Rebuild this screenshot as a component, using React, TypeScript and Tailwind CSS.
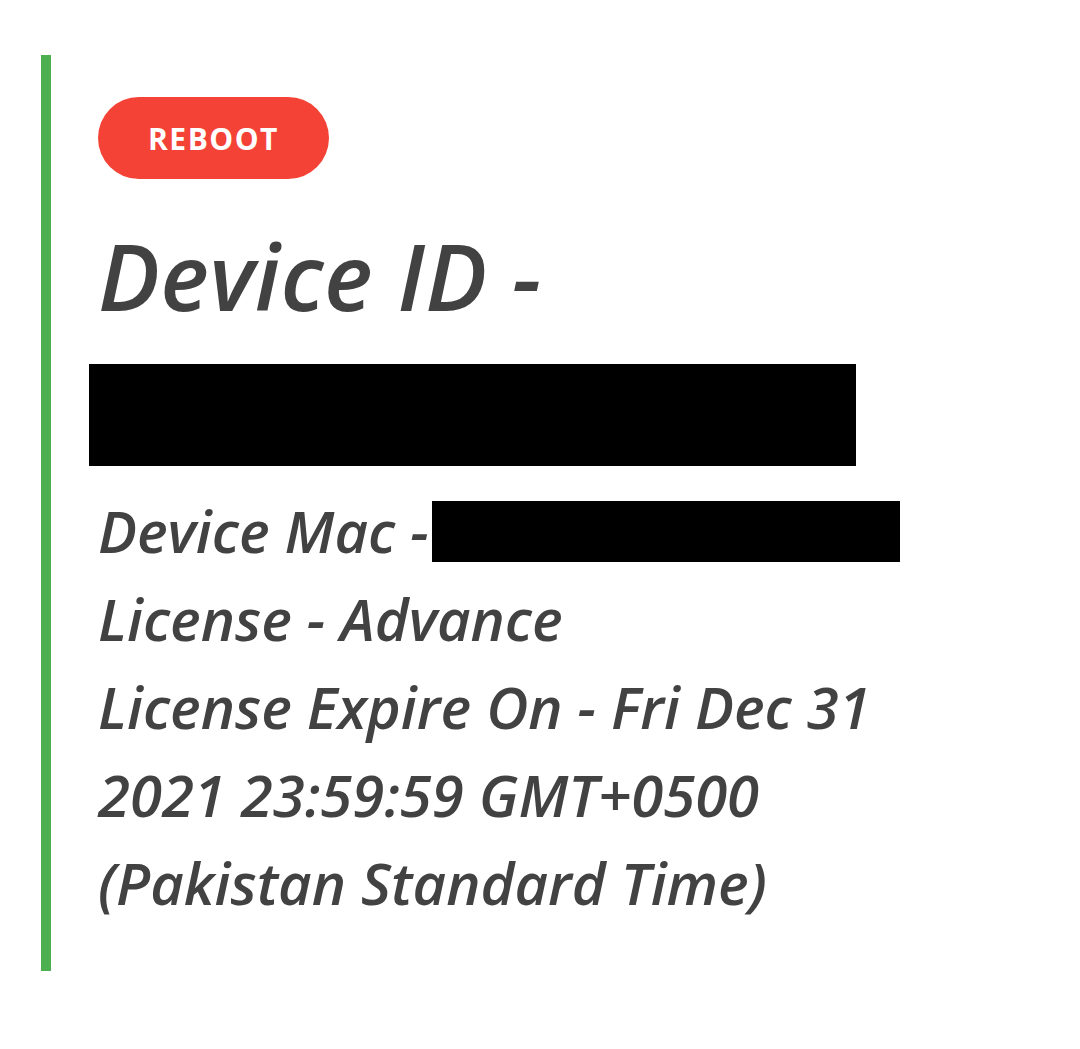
import React from "react";

export default function App() {
  return (
    <div className="min-h-[1049px] w-[1080px] bg-white pt-[55px] pl-[41px] font-['Open_Sans',sans-serif]">
      <div className="border-l-[10px] border-[#4caf50] pl-[47px] pt-[42px] pb-[44px] w-[980px]">
        <button className="h-[82px] w-[231px] rounded-full bg-[#f44336] text-white text-[30px] font-bold tracking-[1.5px] flex items-center justify-center">
          REBOOT
        </button>
        <h1 className="mt-[47px] text-[92px] leading-[100px] italic font-semibold text-[#424242] tracking-[0.5px]">
          Device ID -
        </h1>
        <div className="mt-[38px] -ml-[9px] h-[102px] w-[767px] bg-black" />
        <div className="mt-[21px] text-[58px] leading-[88px] italic font-semibold text-[#424242] whitespace-nowrap">
          <div className="flex items-center">
            <span>Device Mac -</span>
            <span className="ml-[3px] inline-block h-[61px] w-[468px] bg-black" />
          </div>
          <div>License - Advance</div>
          <div>License Expire On - Fri Dec 31</div>
          <div>2021 23:59:59 GMT+0500</div>
          <div>(Pakistan Standard Time)</div>
        </div>
      </div>
    </div>
  );
}
